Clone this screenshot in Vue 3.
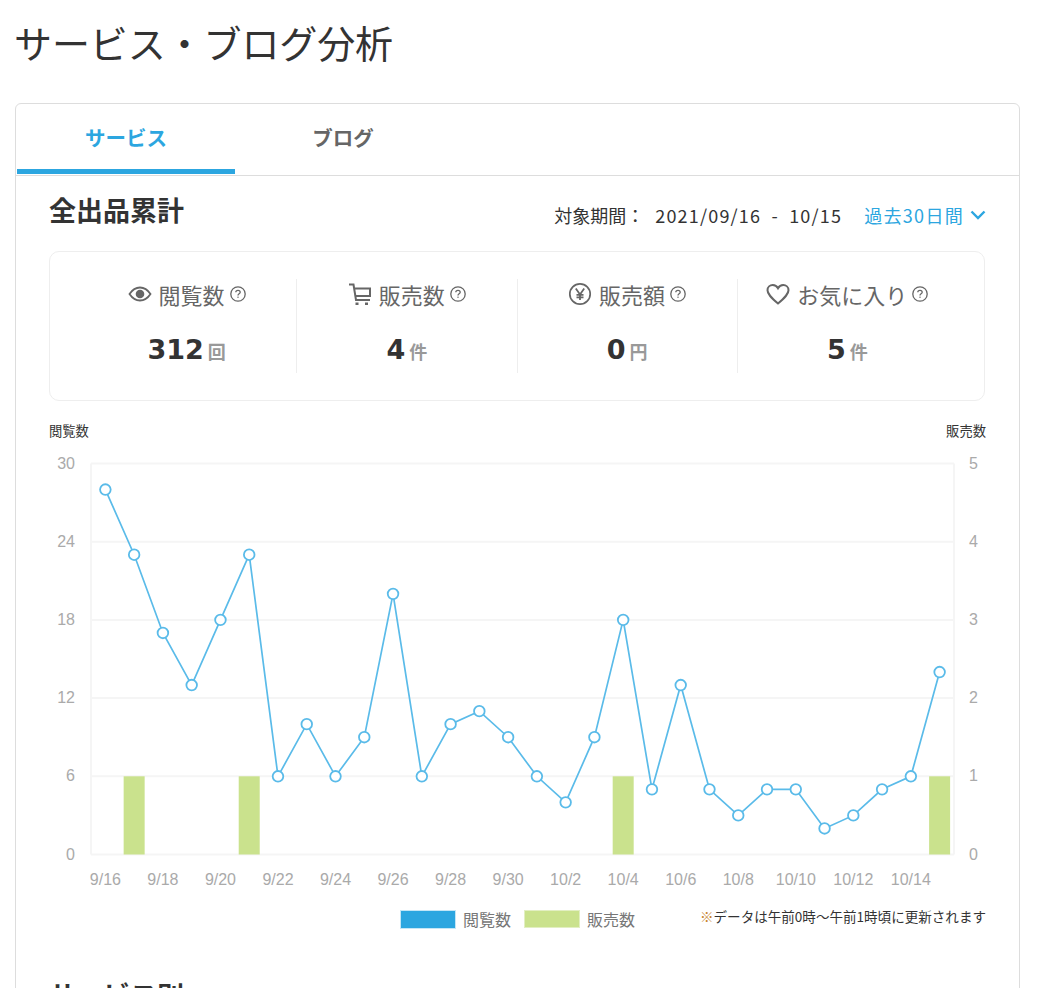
<template>
  <div class="page">
    <h1 class="title">サービス・ブログ分析</h1>
    <div class="card">
      <div class="tabs">
        <div class="tab active">サービス</div>
        <div class="tab">ブログ</div>
      </div>
      <div class="body">
        <div class="head">
          <h2 class="head-title">全出品累計</h2>
          <div class="period">
            <span class="period-label">対象期間：</span>
            <span class="period-dates">2021/09/16 - 10/15</span>
            <span class="period-select">過去30日間
              <svg class="chevron" viewBox="0 0 16 10" width="16" height="10">
                <path d="M1.5 1.5 8 8l6.500-6.500" fill="none" stroke="#2ca6e0" stroke-width="2.400" />
              </svg>
            </span>
          </div>
        </div>

        <div class="stats">
          <div v-for="s in stats" :key="s.label" class="stat">
            <div class="stat-label">
              <svg v-if="s.icon === 'eye'" class="stat-icon" viewBox="0 0 24 24" width="24" height="24">
                <path d="M1.500 12C4.500 7.500 8 5.500 12 5.500s7.500 2 10.500 6.500c-3 4.500-6.500 6.500-10.500 6.500S4.500 16.500 1.500 12z" fill="none" stroke="#666" stroke-width="1.800" />
                <circle cx="12" cy="12" r="4.300" fill="#666" />
              </svg>
              <svg v-else-if="s.icon === 'cart'" class="stat-icon" viewBox="0 0 24 24" width="24" height="24">
                <path d="M1 2.500h4.500l2.500 15.500h14M6.500 6.500h15.500v7.500H7.500" fill="none" stroke="#666" stroke-width="2" />
                <rect x="7.500" y="20.500" width="3" height="2.500" fill="#666" />
                <rect x="17" y="20.500" width="3" height="2.500" fill="#666" />
              </svg>
              <svg v-else-if="s.icon === 'yen'" class="stat-icon" viewBox="0 0 24 24" width="24" height="24">
                <circle cx="12" cy="12" r="10.200" fill="none" stroke="#666" stroke-width="1.700" />
                <path d="M7.800 6.500 12 12.500l4.200-6M12 12.500v5.500M8.500 12.800h7M8.500 15.300h7" fill="none" stroke="#666" stroke-width="1.800" />
              </svg>
              <svg v-else class="stat-icon" viewBox="0 0 24 24" width="24" height="24">
                <path d="M12 21.500C5 15.500 1.500 12 1.500 8.200 1.500 5 4 3 6.800 3c2.200 0 4 1.100 5.200 3.200C13.200 4.100 15 3 17.200 3c2.800 0 5.300 2 5.300 5.200 0 3.800-3.500 7.300-10.500 13.300z" fill="none" stroke="#666" stroke-width="2" />
              </svg>
              <span>{{ s.label }}</span>
              <svg class="help" viewBox="0 0 16 16" width="16" height="16">
                <circle cx="8" cy="8" r="7.200" fill="none" stroke="#666" stroke-width="1.300" />
                <path d="M5.800 6.300C5.800 5 6.800 4.300 8 4.300s2.200.8 2.200 1.900c0 1.700-2.200 1.500-2.200 3.300" fill="none" stroke="#666" stroke-width="1.300" />
                <rect x="7.400" y="10.600" width="1.200" height="1.300" fill="#666" />
              </svg>
            </div>
            <div class="stat-value">
              <span class="num">{{ s.value }}</span><span class="unit">{{ s.unit }}</span>
            </div>
          </div>
        </div>

        <div class="axis-names">
          <span>閲覧数</span>
          <span>販売数</span>
        </div>

        <svg class="chart" viewBox="0 0 936 470" width="936" height="470">
          <!-- grid -->
          <line v-for="n in 6" :key="'g' + n" :x1="plot.left" :x2="plot.right" :y1="gridY(n - 1)" :y2="gridY(n - 1)" stroke="#f5f5f5" stroke-width="2" />
          <line :x1="plot.left" :x2="plot.left" :y1="plot.top" :y2="plot.bottom" stroke="#f5f5f5" stroke-width="2" />
          <line :x1="plot.right" :x2="plot.right" :y1="plot.top" :y2="plot.bottom" stroke="#f5f5f5" stroke-width="2" />

          <text v-for="n in 6" :key="'l' + n" class="tick" :x="plot.left - 16" :y="gridY(n - 1) + 5" text-anchor="end">{{ (n - 1) * 6 }}</text>
          <text v-for="n in 6" :key="'r' + n" class="tick" :x="plot.right + 15" :y="gridY(n - 1) + 5">{{ n - 1 }}</text>
          <text v-for="(d, i) in dates" v-show="i % 2 === 0" :key="d" class="tick" :x="pointX(i)" :y="plot.bottom + 30" text-anchor="middle">{{ d }}</text>

          <rect v-for="i in sales" :key="'b' + i" :x="pointX(i) - 10.500" :y="gridY(1)" width="21" :height="plot.bottom - gridY(1)" fill="#cae28d" />

          <polyline :points="linePoints" fill="none" stroke="#5abbe9" stroke-width="1.700" />
          <circle v-for="(v, i) in views" :key="'p' + i" :cx="pointX(i)" :cy="valueY(v)" r="5.300" fill="#fff" stroke="#5abbe9" stroke-width="1.800" />
        </svg>

        <div class="legend-row">
          <div class="legend">
            <span class="swatch blue"></span><span class="legend-text">閲覧数</span>
            <span class="swatch green"></span><span class="legend-text">販売数</span>
          </div>
          <p class="note"><span class="mark">※</span>データは午前0時～午前1時頃に更新されます</p>
        </div>

        <h2 class="head-title next">サービス別</h2>
      </div>
    </div>
  </div>
</template>

<script setup>
const stats = [
  { icon: 'eye', label: '閲覧数', value: '312', unit: '回' },
  { icon: 'cart', label: '販売数', value: '4', unit: '件' },
  { icon: 'yen', label: '販売額', value: '0', unit: '円' },
  { icon: 'heart', label: 'お気に入り', value: '5', unit: '件' }
]

const views = [28, 23, 17, 13, 18, 23, 6, 10, 6, 9, 20, 6, 10, 11, 9, 6, 4, 9, 18, 5, 13, 5, 3, 5, 5, 2, 3, 5, 6, 14]
const sales = [1, 5, 18, 29]

const dates = []
for (let d = 16; d <= 30; d++) dates.push('9/' + d)
for (let d = 1; d <= 15; d++) dates.push('10/' + d)

// chart coords are relative to the svg, which starts at x=49
const plot = { left: 42, right: 905, top: 17.500, bottom: 408.500 }
const step = (plot.right - plot.left) / 30

const pointX = (i) => plot.left + (i + 0.5) * step
const valueY = (v) => plot.bottom - (v / 30) * (plot.bottom - plot.top)
const gridY = (n) => valueY(n * 6)
const linePoints = views.map((v, i) => pointX(i) + ',' + valueY(v)).join(' ')
</script>

<style scoped>
.page {
  width: 1039px;
  height: 988px;
  overflow: hidden;
  color: #333;
  font-family: "Noto Sans CJK JP", "Noto Sans", sans-serif;
}
.title {
  margin: 0;
  padding: 14px 0 0 14px;
  height: 89px;
  box-sizing: border-box;
  font-size: 38px;
  line-height: 56px;
  font-weight: 400;
  letter-spacing: -0.1px;
  color: #333;
}
.card {
  margin: 14px 19px 0 15px;
  border: 1px solid #ddd;
  border-radius: 6px;
  height: 960px;
}
.tabs {
  display: flex;
  height: 71px;
  border-bottom: 1px solid #ddd;
}
.tab {
  width: 218px;
  height: 65px;
  text-align: center;
  line-height: 66px;
  font-size: 20.500px;
  font-weight: 700;
  color: #666;
}
.tab:first-child {
  margin-left: 1px;
}
.tab:nth-child(2) {
  width: 216px;
}
.tab.active {
  color: #2ca6e0;
  border-bottom: 5px solid #2ca6e0;
}
.body {
  padding: 0 33px;
}
.head {
  display: flex;
  justify-content: space-between;
  align-items: center;
  height: 75px;
}
.head-title {
  margin: 0;
  font-size: 27px;
  font-weight: 700;
  color: #333;
  line-height: 36px;
}
.head > .head-title {
  margin-top: -8px;
}
.period {
  display: flex;
  align-items: center;
  font-size: 18px;
  margin-top: 2px;
}
.period-label {
  width: 101px;
}
.period-dates {
  width: 209px;
  letter-spacing: 1.200px;
  word-spacing: 5px;
  white-space: nowrap;
}
.period-select {
  display: flex;
  align-items: center;
  color: #2ca6e0;
  letter-spacing: 1.300px;
  white-space: nowrap;
}
.chevron {
  margin-left: 6px;
}
.stats {
  display: flex;
  box-sizing: border-box;
  width: 936px;
  height: 150px;
  padding: 27px 27px;
  border: 1px solid #eee;
  border-radius: 10px;
}
.stat {
  flex: 1;
  border-right: 1px solid #eee;
  text-align: center;
}
.stat:last-child {
  border-right: 0;
}
.stat-label {
  display: flex;
  justify-content: center;
  align-items: center;
  gap: 7px;
  height: 32px;
  margin-top: -1px;
  font-size: 22px;
  color: #666;
}
.stat-icon {
  flex: none;
}
.help {
  flex: none;
  margin-left: -2px;
}
.stat-value {
  margin-top: 15px;
  height: 50px;
  line-height: 50px;
}
.num {
  font-family: "DejaVu Sans", sans-serif;
  font-size: 27px;
  font-weight: 700;
  color: #333;
}
.unit {
  margin-left: 4px;
  font-size: 18px;
  font-weight: 700;
  color: #999;
}
.axis-names {
  display: flex;
  justify-content: space-between;
  margin-top: 20px;
  height: 25px;
  line-height: 20px;
  font-size: 13.300px;
  color: #333;
}
.chart {
  display: block;
}
.tick {
  font-family: "Liberation Sans", sans-serif;
  font-size: 16px;
  fill: #aaa;
}
.legend-row {
  display: flex;
  align-items: center;
  justify-content: flex-end;
  height: 22px;
  margin-top: -11px;
}
.legend {
  display: flex;
  align-items: center;
  margin-top: 6px;
  margin-right: 65px;
}
.swatch {
  box-sizing: border-box;
  width: 56px;
  margin-right: 7px;
}
.swatch.blue {
  height: 19px;
  background: #2ca6e0;
  border: 1px solid #c4e6f6;
}
.swatch.green {
  height: 18px;
  background: #cae28d;
  border: 1px solid #e2efc2;
  margin-left: 13px;
}
.legend-text {
  font-size: 16px;
  color: #777;
}
.note {
  margin: 0;
  font-size: 13.550px;
  color: #333;
  white-space: nowrap;
}
.mark {
  color: #c8842d;
}
.next {
  margin-top: 50px;
}
</style>

<style>
html, body {
  background: #fff;
}
</style>
